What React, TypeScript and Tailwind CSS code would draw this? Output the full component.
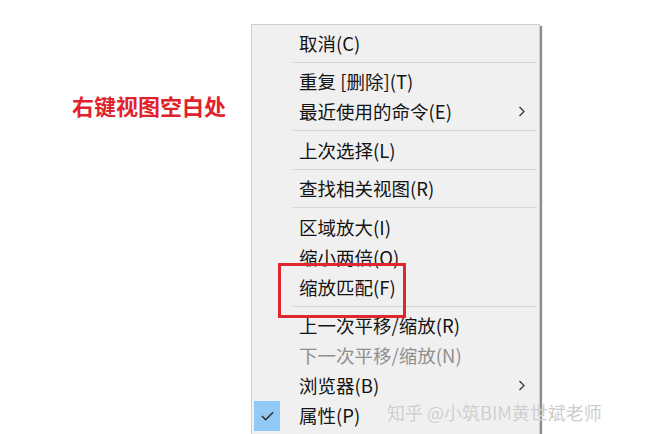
import React from "react";

type Entry =
  | { kind: "item"; label: string; sub?: boolean; disabled?: boolean; checked?: boolean }
  | { kind: "sep" };

const entries: Entry[] = [
  { kind: "item", label: "取消(C)" },
  { kind: "sep" },
  { kind: "item", label: "重复 [删除](T)" },
  { kind: "item", label: "最近使用的命令(E)", sub: true },
  { kind: "sep" },
  { kind: "item", label: "上次选择(L)" },
  { kind: "sep" },
  { kind: "item", label: "查找相关视图(R)" },
  { kind: "sep" },
  { kind: "item", label: "区域放大(I)" },
  { kind: "item", label: "缩小两倍(O)" },
  { kind: "item", label: "缩放匹配(F)" },
  { kind: "sep" },
  { kind: "item", label: "上一次平移/缩放(R)" },
  { kind: "item", label: "下一次平移/缩放(N)", disabled: true },
  { kind: "item", label: "浏览器(B)", sub: true },
  { kind: "item", label: "属性(P)", checked: true },
];

function Chevron() {
  return (
    <svg viewBox="0 0 7 11" className="w-[7px] h-[11px]" aria-hidden="true">
      <path d="M1.5 1L6 5.5L1.5 10" fill="none" stroke="#3a3a3a" strokeWidth="1.3" />
    </svg>
  );
}

function Check() {
  return (
    <svg viewBox="0 0 14 10" className="w-[13px] h-[10px]" aria-hidden="true">
      <path d="M1 5L5 9L13 1" fill="none" stroke="#2b2b2b" strokeWidth="1.6" />
    </svg>
  );
}

export default function App() {
  return (
    <div
      className="relative w-[655px] h-[434px] overflow-hidden bg-white"
      style={{ fontFamily: '"Noto Sans CJK SC", "Noto Sans", sans-serif' }}
    >
      <div className="flex items-start pt-[24px]">
        {/* Label */}
        <div className="pl-[72px] pt-[70px] w-[251px] shrink-0">
          <span className="text-[22px] leading-[22px] font-bold text-[#e0222c] whitespace-nowrap">
            右键视图空白处
          </span>
        </div>

        {/* Context menu */}
        <div className="relative w-[289px] shrink-0 bg-[#f0f0f0] border border-[#cfcfcf] shadow-[2px_2px_1px_rgba(0,0,0,0.45)] pt-[3px] pb-[3px]">
          {entries.map((e, i) =>
            e.kind === "sep" ? (
              <div key={i} className="h-[8.5px] flex items-center pl-[41px] pr-[2px]">
                <div className="h-px w-full bg-[#d6d6d6]" />
              </div>
            ) : (
              <div key={i} className="h-[30px] flex items-center">
                <div className="w-[47px] h-full shrink-0 pl-[2px]">
                  {e.checked && (
                    <div className="w-[26px] h-full bg-[#91c9f7] flex items-center justify-center">
                      <Check />
                    </div>
                  )}
                </div>
                <span
                  className={
                    "flex-1 text-[18.5px] leading-none whitespace-nowrap " +
                    (e.disabled ? "text-[#8f8f8f]" : "text-[#141414]")
                  }
                >
                  {e.label}
                </span>
                {e.sub && (
                  <div className="pr-[14px] flex items-center">
                    <Chevron />
                  </div>
                )}
              </div>
            )
          )}

          {/* Highlight frame */}
          <div className="absolute left-[26px] top-[238px] w-[128px] h-[55px] border-[3px] border-[#e0262f]" />
        </div>
      </div>

      {/* Watermark */}
      <div
        className="absolute left-[387px] top-[400px] text-[18px] leading-[24px] text-[#cdcdcd] whitespace-nowrap"
        style={{ textShadow: "0 0 1px rgba(255,255,255,0.9)" }}
      >
        知乎 @小筑BIM黄世斌老师
      </div>
    </div>
  );
}
